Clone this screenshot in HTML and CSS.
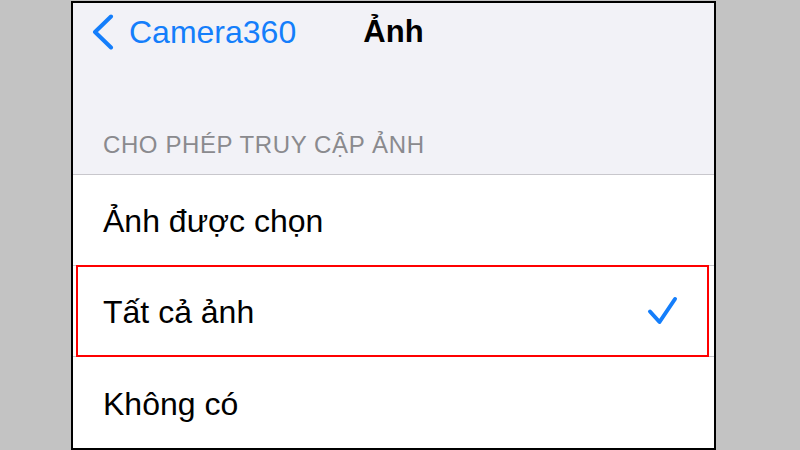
FILE: index.html
```html
<!DOCTYPE html>
<html lang="vi">
  <head>
    <meta charset="UTF-8" />
    <meta name="viewport" content="width=device-width, initial-scale=1.0" />
    <title>Ảnh</title>
    <link rel="stylesheet" href="styles.css">
  </head>
  <body>
    <div class="phone">
      <div class="top">
        <div class="navbar">
          <a class="back" href="#">
            <svg class="chevron" width="22" height="36" viewBox="0 0 22 36">
              <polyline points="19,2.5 3,18 19,33.5" fill="none" stroke="#147efb" stroke-width="4" stroke-linecap="round" stroke-linejoin="round" />
            </svg>
            <span>Camera360</span>
          </a>
          <h1 class="title">Ảnh</h1>
          <div></div>
        </div>
        <div class="section-title">CHO PHÉP TRUY CẬP ẢNH</div>
      </div>

      <ul class="options">
        <li class="option">Ảnh được chọn</li>
        <li class="option selected">
          <span>Tất cả ảnh</span>
          <svg class="check" width="32" height="30" viewBox="0 0 32 30">
            <polyline points="3,15.5 12.5,26 28,3" fill="none" stroke="#147efb" stroke-width="4" stroke-linecap="round" stroke-linejoin="round" />
          </svg>
        </li>
        <li class="option">Không có</li>
      </ul>
    </div>
  </body>
</html>
```

FILE: styles.css
```css
html,
body {
  margin: 0;
  height: 100%;
}
body {
  background: #c3c3c3;
  font-family: "Liberation Sans", Arial, sans-serif;
  overflow: hidden;
}
.phone {
  box-sizing: border-box;
  width: 645px;
  height: 449px;
  margin: 1px 0 0 71px;
  border: 2px solid #000;
  background: #fff;
  display: flex;
  flex-direction: column;
}
.top {
  flex-shrink: 0;
  background: #f2f2f7;
  height: 171px;
  display: flex;
  flex-direction: column;
}
.navbar {
  display: grid;
  grid-template-columns: 1fr auto 1fr;
  align-items: center;
  height: 57px;
}
.back {
  display: flex;
  align-items: center;
  gap: 15px;
  padding-left: 19px;
  color: #147efb;
  text-decoration: none;
  font-size: 32px;
  line-height: 36px;
}
.chevron {
  display: block;
}
.title {
  margin: 0;
  font-size: 31px;
  line-height: 36px;
  font-weight: bold;
  color: #000;
}
.section-title {
  margin-top: auto;
  padding: 0 0 15px 30px;
  font-size: 24px;
  line-height: 28px;
  letter-spacing: 0.6px;
  color: #8a8a8e;
}
.options {
  list-style: none;
  margin: 0;
  padding: 0;
  border-top: 1px solid #c8c7cc;
}
.option {
  box-sizing: border-box;
  position: relative;
  display: flex;
  align-items: center;
  justify-content: space-between;
  height: 91px;
  padding: 3px 35px 0 30px;
  border-bottom: 1px solid #c8c7cc;
  font-size: 32px;
  color: #000;
}
.option:last-child {
  border-bottom: none;
}
.selected .check {
  margin-top: -3px;
}
.selected::after {
  content: "";
  position: absolute;
  top: -1px;
  bottom: -1px;
  left: 3px;
  right: 5px;
  border: 2px solid #f00;
}
.check {
  display: block;
}
```
